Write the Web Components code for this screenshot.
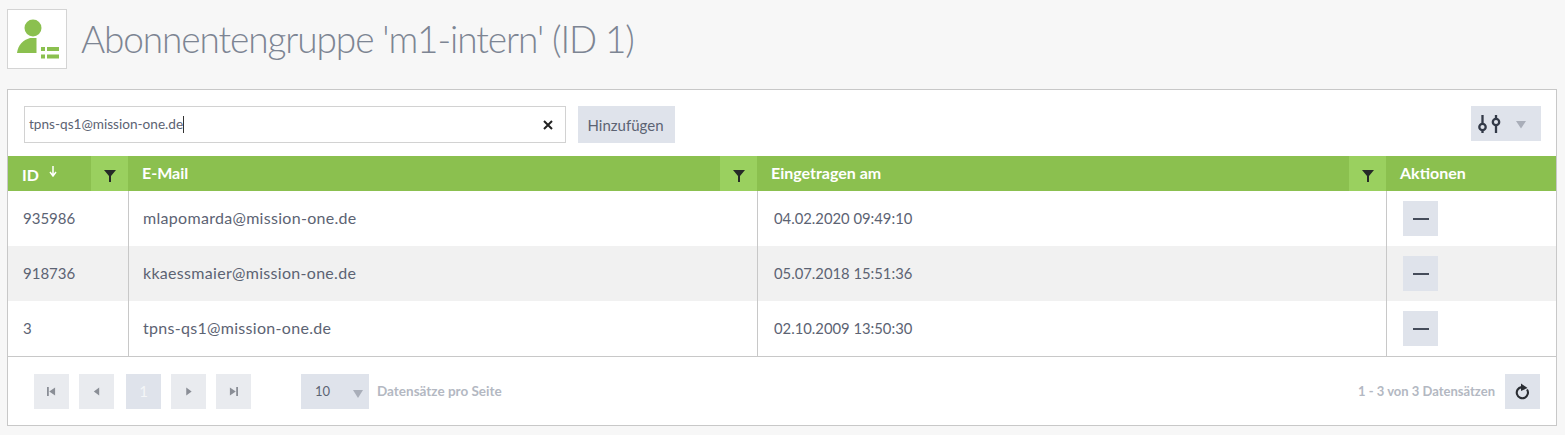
<!DOCTYPE html>
<html lang="de">
<head>
<meta charset="utf-8">
<title>Abonnentengruppe</title>
<style>
    html, body { margin: 0; height: 100%; }
    body {
        background: #f7f7f7;
        color: #5c6373;
        font-family: Lato, "Open Sans", sans-serif;
        overflow: hidden;
    }
</style>
</head>
<body>
<page-header>Abonnentengruppe 'm1-intern' (ID 1)</page-header>
<group-panel>
    <add-bar slot="top" value="tpns-qs1@mission-one.de"></add-bar>
    <grid-head slot="grid"></grid-head>
    <grid-row slot="grid" row-id="935986" mail="mlapomarda@mission-one.de" date="04.02.2020 09:49:10"></grid-row>
    <grid-row slot="grid" row-id="918736" mail="kkaessmaier@mission-one.de" date="05.07.2018 15:51:36" shaded></grid-row>
    <grid-row slot="grid" row-id="3" mail="tpns-qs1@mission-one.de" date="02.10.2009 13:50:30"></grid-row>
    <grid-pager slot="bottom"></grid-pager>
</group-panel>

<script>
const COLUMNS = '121px 629px 629px 1fr';

class PageHeader extends HTMLElement {
    constructor() {
        super();
        this.attachShadow({ mode: 'open' });
        this.shadowRoot.innerHTML = `
            <style>
                :host { display: flex; align-items: center; gap: 14px; padding: 9px 7px 20px; }
                .logo {
                    width: 58px; height: 58px;
                    border: 1px solid #d4d4d4;
                    background: #fff;
                    display: flex; align-items: center; justify-content: center;
                }
                h1 { margin: 0; font-size: 37px; font-weight: 300; color: #7d8593; line-height: 44px; letter-spacing: -1.1px; }
            </style>
            <div class="logo">
                <svg width="58" height="58" viewBox="0 0 58 58">
                    <circle cx="25" cy="18" r="8.500" fill="#8bc04f"/>
                    <path d="M9 43c1-8 6-13 13-15h6.500v15z" fill="#8bc04f"/>
                    <path d="M33 37h4v4h-4zM39 37h12v4H39zM33 44.500h4v4h-4zM39 44.500h12v4H39z" fill="#8bc04f"/>
                </svg>
            </div>
            <h1><slot></slot></h1>
        `;
    }
}

class GroupPanel extends HTMLElement {
    constructor() {
        super();
        this.attachShadow({ mode: 'open' });
        this.shadowRoot.innerHTML = `
            <style>
                :host {
                    display: block;
                    margin: 0 8px 0 7px;
                    height: 335px;
                    background: #fff;
                    border: 1px solid #c8c8c8;
                }
                .grid { border-bottom: 1px solid #c8c8c8; }
            </style>
            <slot name="top"></slot>
            <div class="grid"><slot name="grid"></slot></div>
            <slot name="bottom"></slot>
        `;
    }
}

class AddBar extends HTMLElement {
    constructor() {
        super();
        this.attachShadow({ mode: 'open' });
        this.shadowRoot.innerHTML = `
            <style>
                :host { display: flex; align-items: flex-start; padding: 16px 15px 13px 16px; height: 37px; }
                .field {
                    box-sizing: border-box;
                    width: 542px; height: 37px;
                    border: 1px solid #d2d2d2;
                    display: flex; align-items: center; justify-content: space-between;
                    padding: 0 12px 0 4px;
                    font-size: 13.600px;
                    color: #5c6373;
                }
                .value { border-right: 1px solid #333; line-height: 17px; }
                .add {
                    margin-left: 12px;
                    box-sizing: border-box;
                    width: 97px; height: 37px;
                    padding-right: 2px;
                    background: #dfe3eb;
                    display: flex; align-items: center; justify-content: center;
                    font-size: 15px; color: #5c6373;
                }
                .settings {
                    margin-left: auto;
                    width: 70px; height: 35px;
                    background: #dfe3eb;
                }
                .settings svg { display: block; }
            </style>
            <div class="field">
                <span class="value"></span>
                <svg width="10" height="10" viewBox="0 0 10 10"><path d="M1 1l8 8M9 1l-8 8" stroke="#222" stroke-width="2"/></svg>
            </div>
            <div class="add">Hinzufügen</div>
            <div class="settings">
                <svg width="70" height="35" viewBox="0 0 70 35">
                    <g fill="none" stroke="#333a48" stroke-width="2.300">
                        <path d="M11.500 9v9M11.500 24v3"/><circle cx="11.500" cy="21" r="3.200"/>
                        <path d="M25 9v4M25 19v8"/><circle cx="25" cy="16" r="3.200"/>
                    </g>
                    <path d="M45 15h10l-5 7.500z" fill="#a9aeb9"/>
                </svg>
            </div>
        `;
        this.shadowRoot.querySelector('.value').textContent = this.getAttribute('value');
    }
}

class GridHead extends HTMLElement {
    constructor() {
        super();
        this.attachShadow({ mode: 'open' });
        const funnel = `
            <div class="filter">
                <svg width="12" height="12" viewBox="0 0 12 12"><path d="M0 0h12L7 6v6H5V6z" fill="#262a28"/></svg>
            </div>`;
        this.shadowRoot.innerHTML = `
            <style>
                :host {
                    display: grid;
                    grid-template-columns: ${COLUMNS};
                    height: 35px;
                    background: #8bc04f;
                    color: #fff;
                    font-size: 16px;
                    font-weight: 700;
                }
                .cell { display: flex; align-items: center; justify-content: space-between; }
                .label { padding-left: 13px; display: flex; align-items: center; gap: 10px; margin-top: -2px; }
                .id .label { padding-left: 14px; margin-top: 1px; }
                .filter {
                    width: 37px; height: 35px;
                    margin-right: 1px;
                    background: #9ad05f;
                    display: flex; align-items: center; justify-content: center;
                    padding-top: 5px; box-sizing: border-box;
                }
            </style>
            <div class="cell id">
                <span class="label">ID
                    <svg width="8" height="11" viewBox="0 0 8 11" style="margin-top:-6px"><path d="M4 0v9M1 6l3 4 3-4" fill="none" stroke="#fff" stroke-width="1.500"/></svg>
                </span>${funnel}
            </div>
            <div class="cell"><span class="label">E-Mail</span>${funnel}</div>
            <div class="cell"><span class="label">Eingetragen am</span>${funnel}</div>
            <div class="cell"><span class="label">Aktionen</span></div>
        `;
    }
}

class GridRow extends HTMLElement {
    constructor() {
        super();
        this.attachShadow({ mode: 'open' });
        this.shadowRoot.innerHTML = `
            <style>
                :host {
                    display: grid;
                    grid-template-columns: ${COLUMNS};
                    height: 55px;
                    background: #fff;
                    color: #5c6373;
                    font-size: 15px;
                }
                :host([shaded]) { background: #f1f1f1; }
                .cell {
                    box-sizing: border-box;
                    display: flex; align-items: center;
                    padding-left: 15px;
                    padding-bottom: 1px;
                    border-right: 1px solid #c8c8c8;
                }
                .cell.mail { padding-left: 14px; font-size: 16px; letter-spacing: 0.3px; padding-bottom: 2px; }
                .cell.date { padding-left: 16px; font-size: 14.800px; padding-bottom: 2px; }
                .cell.acts { border-right: 0; padding: 0 0 0 16px; }
                .minus {
                    width: 35px; height: 35px;
                    background: #dfe3eb;
                    display: flex; align-items: center; justify-content: center;
                }
                .minus i { display: block; width: 16px; height: 2px; background: #454c5a; }
            </style>
            <div class="cell id"></div>
            <div class="cell mail"></div>
            <div class="cell date"></div>
            <div class="cell acts"><div class="minus"><i></i></div></div>
        `;
        this.shadowRoot.querySelector('.id').textContent = this.getAttribute('row-id');
        this.shadowRoot.querySelector('.mail').textContent = this.getAttribute('mail');
        this.shadowRoot.querySelector('.date').textContent = this.getAttribute('date');
    }
}

class GridPager extends HTMLElement {
    constructor() {
        super();
        this.attachShadow({ mode: 'open' });
        const btn = (d) => `
            <div class="btn">
                <svg width="9" height="9" viewBox="0 0 10 10"><path d="${d}" fill="#8a8e96"/></svg>
            </div>`;
        this.shadowRoot.innerHTML = `
            <style>
                :host {
                    display: flex; align-items: center;
                    height: 68px;
                    padding: 0 16px 0 26px;
                    font-size: 13px;
                    font-weight: 700;
                    color: #b3b8c2;
                }
                .btn {
                    width: 35px; height: 35px;
                    background: #e9ebef;
                    display: flex; align-items: center; justify-content: center;
                    margin-right: 10px;
                }
                .btn.current { background: #dfe3eb; color: #f4f6f8; font-size: 15px; font-weight: 400; margin: 0 10px 0 2px; }
                .size {
                    margin-left: 40px;
                    width: 68px; height: 35px;
                    box-sizing: border-box;
                    background: #dfe3eb;
                    display: flex; align-items: center; justify-content: space-between;
                    padding: 0 6px 0 14px;
                    color: #5c6373; font-size: 13px; font-weight: 400;
                }
                .size svg { margin-top: 6px; }
                .per { margin-left: 8px; font-size: 13.500px; }
                .count { margin-left: auto; }
                .reload {
                    margin-left: 10px;
                    width: 35px; height: 35px;
                    background: #dfe3eb;
                    display: flex; align-items: center; justify-content: center;
                }
            </style>
            ${btn('M0 0h2v10H0zM9 .500v9L2.500 5z')}
            ${btn('M8 .500v9L2 5z')}
            <div class="btn current">1</div>
            ${btn('M2.500 .500v9L8.500 5z')}
            ${btn('M1 .500v9L7.500 5zM8 0h2v10H8z')}
            <div class="size">10
                <svg width="10" height="8" viewBox="0 0 10 8"><path d="M0 0h10L5 8z" fill="#a9aeb9"/></svg>
            </div>
            <span class="per">Datensätze pro Seite</span>
            <span class="count">1 - 3 von 3 Datensätzen</span>
            <div class="reload">
                <svg width="15" height="17" viewBox="0 0 15 17">
                    <path d="M6.500 4.100A5.600 5.600 0 1 0 12 6.500" fill="none" stroke="#2a2d33" stroke-width="2.100"/>
                    <path d="M6 .500v7.500l6.500-3z" fill="#2a2d33"/>
                </svg>
            </div>
        `;
    }
}

customElements.define('page-header', PageHeader);
customElements.define('group-panel', GroupPanel);
customElements.define('add-bar', AddBar);
customElements.define('grid-head', GridHead);
customElements.define('grid-row', GridRow);
customElements.define('grid-pager', GridPager);
</script>
</body>
</html>
